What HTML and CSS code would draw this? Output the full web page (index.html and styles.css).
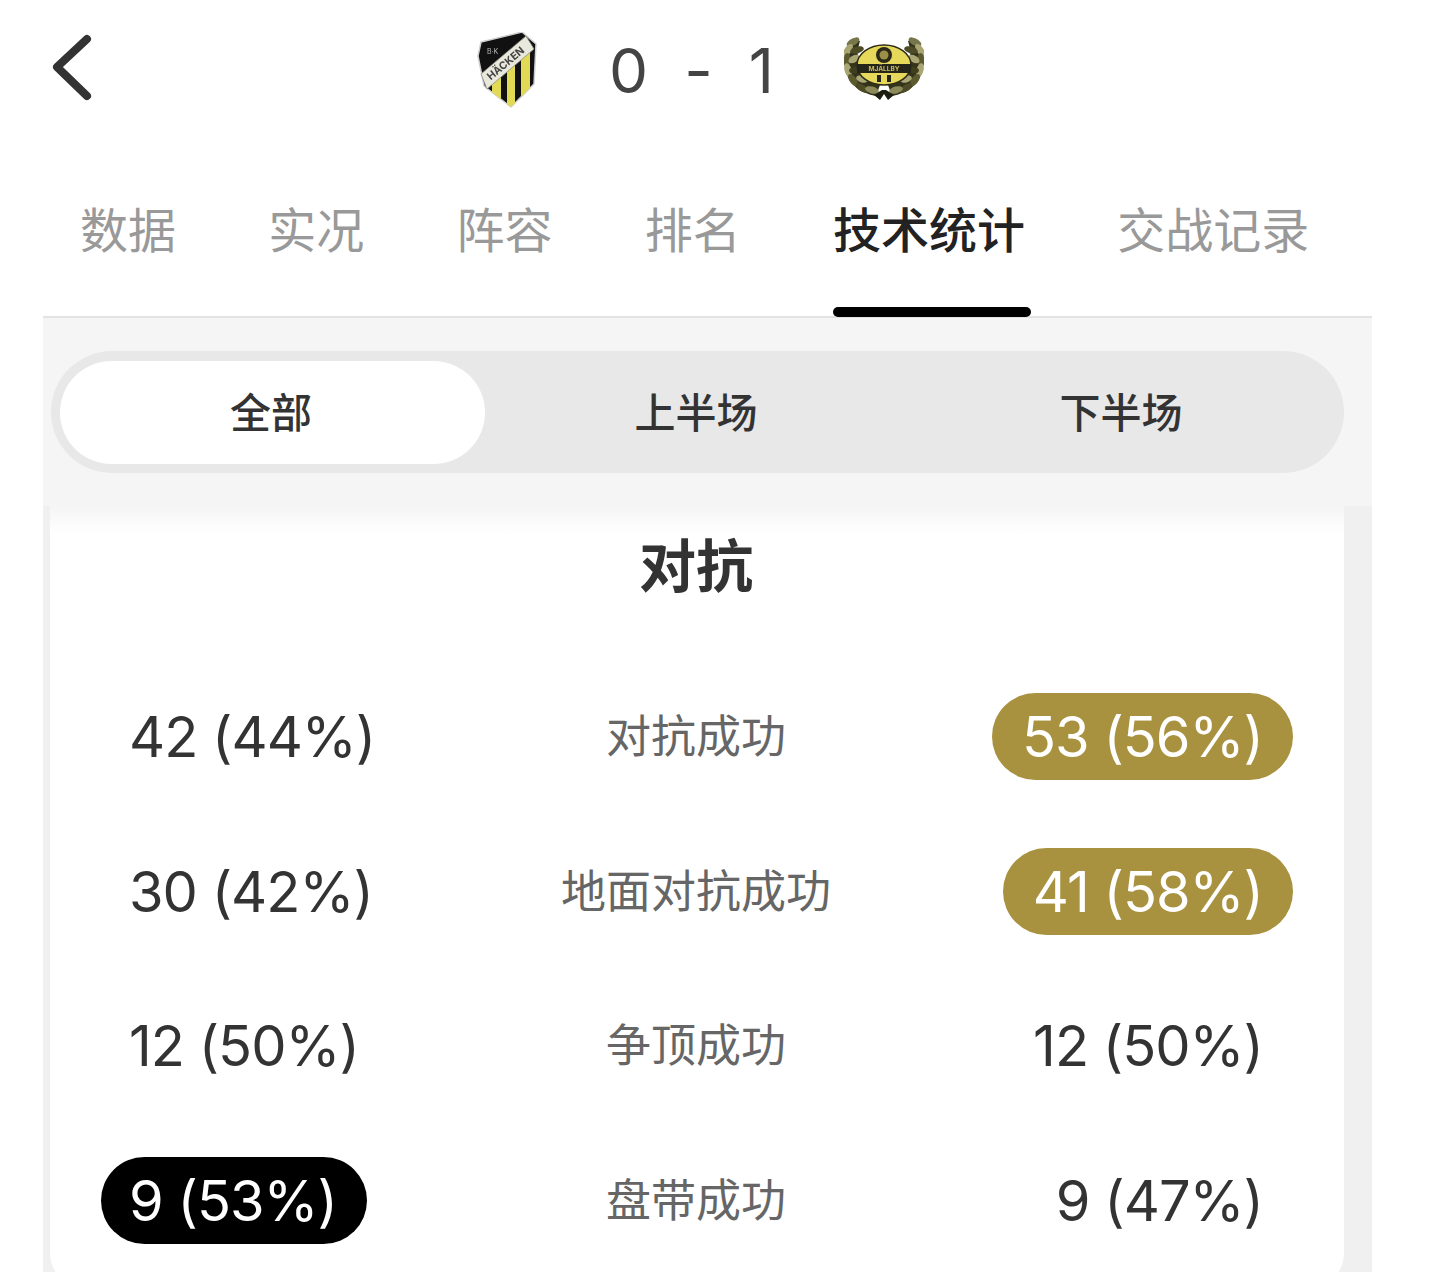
FILE: index.html
```html
<!DOCTYPE html>
<html lang="zh-CN">
<head>
  <meta charset="UTF-8" />
  <meta name="viewport" content="width=device-width, initial-scale=1.0"/>
  <title>技术统计</title>
  <link rel="stylesheet" href="styles.css">
</head>
<body>
  <div class="page">
    <!-- Score header -->
    <header class="match-head">
      <svg class="back" viewBox="0 0 44 68" width="44" height="68" aria-hidden="true">
        <path d="M37 5 L7 33 L37 62" fill="none" stroke="#333" stroke-width="8" stroke-linecap="round" stroke-linejoin="round"/>
      </svg>
      <div class="score">
        <svg class="crest-home" viewBox="0 0 64 76" width="64" height="76" aria-hidden="true">
          <defs>
            <clipPath id="shield"><path d="M7 10 L48 0 L62 12 L60 52 L37 75 L10 54 L4 24 Z"/></clipPath>
          </defs>
          <path d="M7 10 L48 0 L62 12 L60 52 L37 75 L10 54 L4 24 Z" fill="#111" stroke="#cfcfcf" stroke-width="1.5" stroke-linejoin="round"/>
          <g clip-path="url(#shield)">
            <path d="M18 38 h9 v38 h-9 Z M33 24 h8 v52 h-8 Z M47 12 h9 v56 h-9 Z" fill="#e2da55"/>
          </g>
          <path d="M7 42 L52 4 L60 17 L13 57 Z" fill="#e8e8dc" stroke="#8d8d80" stroke-width="0.8"/>
          <text class="crest-band" transform="translate(34 34) rotate(-40)">HÄCKEN</text>
          <text class="crest-bk" x="13" y="22">B·K</text>
        </svg>
        <span class="score-num first">0</span>
        <span class="score-dash">-</span>
        <span class="score-num">1</span>
        <svg class="crest-away" viewBox="0 0 80 64" width="80" height="64" aria-hidden="true">
          <defs>
            <g id="wreath">
              <path d="M10 2 C1 12 -1 26 3 38 C7 48 16 56 32 59 L36 48 C24 44 16 36 14 26 C13 18 14 10 16 4 Z" fill="#33321a"/>
              <ellipse cx="9" cy="5" rx="7" ry="3.5" transform="rotate(-30 9 5)" fill="#77764a"/>
              <ellipse cx="4" cy="13" rx="7" ry="3.5" transform="rotate(-55 4 13)" fill="#a9a673"/>
              <ellipse cx="13" cy="13" rx="7" ry="3.5" transform="rotate(-15 13 13)" fill="#4c4b26"/>
              <ellipse cx="3" cy="23" rx="7" ry="3.5" transform="rotate(-85 3 23)" fill="#5c5b30"/>
              <ellipse cx="10" cy="22" rx="6" ry="3.5" transform="rotate(-30 10 22)" fill="#a9a673"/>
              <ellipse cx="4" cy="33" rx="7" ry="3.5" transform="rotate(75 4 33)" fill="#a9a673"/>
              <ellipse cx="11" cy="33" rx="6" ry="3.5" transform="rotate(-10 11 33)" fill="#3f3e1f"/>
              <ellipse cx="9" cy="43" rx="7" ry="3.5" transform="rotate(55 9 43)" fill="#5c5b30"/>
              <ellipse cx="18" cy="42" rx="6" ry="3.5" transform="rotate(15 18 42)" fill="#a9a673"/>
              <ellipse cx="18" cy="51" rx="7" ry="3.5" transform="rotate(35 18 51)" fill="#4c4b26"/>
              <ellipse cx="28" cy="53" rx="7" ry="3.5" transform="rotate(15 28 53)" fill="#8b8a58"/>
            </g>
          </defs>
          <use href="#wreath"/>
          <use href="#wreath" transform="matrix(-1 0 0 1 80 0)"/>
          <ellipse cx="40" cy="28" rx="27" ry="20" fill="#e6d85a" stroke="#2e2d16" stroke-width="1.5"/>
          <circle cx="40" cy="18" r="8" fill="#2b2a18"/>
          <circle cx="40" cy="18" r="4.5" fill="#9c9048"/>
          <rect x="13" y="27" width="54" height="9" fill="#26251a"/>
          <text class="crest-name" x="40" y="34">MJÄLLBY</text>
          <path d="M33 38 h4 v7 h-4 Z M43 38 h4 v7 h-4 Z" fill="#26251a"/>
          <path d="M30 58 L38 53 L42 53 L50 58 L44 63 L40 57 L36 63 Z" fill="#1d1c10"/>
        </svg>
      </div>
    </header>

    <main class="content">
      <nav class="tabs">
        <a class="tab">数据</a>
        <a class="tab">实况</a>
        <a class="tab">阵容</a>
        <a class="tab">排名</a>
        <a class="tab active">技术统计</a>
        <a class="tab">交战记录</a>
      </nav>

      <section class="panel">
        <div class="segment-bar">
          <div class="segment selected">全部</div>
          <div class="segment">上半场</div>
          <div class="segment">下半场</div>
        </div>

        <div class="card-wrap">
          <div class="card">
            <h2>对抗</h2>
            <div class="stat-row">
              <span class="val left">42 (44%)</span>
              <span class="label">对抗成功</span>
              <span class="val right gold">53 (56%)</span>
            </div>
            <div class="stat-row">
              <span class="val left">30 (42%)</span>
              <span class="label">地面对抗成功</span>
              <span class="val right gold">41 (58%)</span>
            </div>
            <div class="stat-row">
              <span class="val left">12 (50%)</span>
              <span class="label">争顶成功</span>
              <span class="val right">12 (50%)</span>
            </div>
            <div class="stat-row">
              <span class="val left black">9 (53%)</span>
              <span class="label">盘带成功</span>
              <span class="val right">9 (47%)</span>
            </div>
          </div>
        </div>
      </section>
    </main>
  </div>
</body>
</html>
```

FILE: styles.css
```css
* {
  box-sizing: border-box;
  margin: 0;
  padding: 0;
  font-family: Inter, 'Noto Sans CJK SC', sans-serif;
}

body {
  background: #fff;
  color: #333;
}

.page {
  height: 1272px;
  overflow: hidden;
}

.match-head {
  height: 140px;
  position: relative;
}

.back {
  position: absolute;
  left: 50px;
  top: 34px;
}

.score {
  height: 140px;
  padding-left: 474px;
  display: flex;
  align-items: center;
  color: #444;
}

.crest-home {
  flex: none;
  margin-top: -1px;
  filter: blur(0.4px);
}

.crest-away {
  flex: none;
  margin-left: 70px;
  margin-top: -2px;
  filter: blur(0.4px);
}

.score-num {
  font-size: 62px;
  margin-left: 36px;
}

.score-num.first {
  margin-left: 71px;
}

.score-dash {
  font-size: 62px;
  margin-left: 36px;
}

.crest-band {
  font-size: 10.5px;
  font-weight: bold;
  fill: #444;
  text-anchor: middle;
}

.crest-bk {
  font-size: 7px;
  fill: #bbb;
}

.crest-name {
  font-size: 6.5px;
  font-weight: bold;
  fill: #c9bc62;
  text-anchor: middle;
}

.content {
  margin-left: 43px;
  width: 1329px;
}

.tabs {
  height: 178px;
  padding: 45px 0 0 37px;
  display: flex;
  gap: 92.25px;
  border-bottom: 2px solid #e3e3e3;
}

.tab {
  position: relative;
  height: 90px;
  font-size: 48px;
  line-height: 92px;
  color: #999;
}

.tab.active {
  font-weight: 500;
  color: #222;
}

.tab.active::after {
  content: "";
  position: absolute;
  left: 0;
  right: -6px;
  bottom: -42px;
  height: 10px;
  border-radius: 5px;
  background: #000;
}

.panel {
  background: #f5f5f5;
}

.segment-bar {
  margin-left: 8px;
  width: 1293px;
  height: 122px;
  position: relative;
  top: 33px;
  padding: 10px 9px;
  display: grid;
  grid-template-columns: repeat(3, 1fr);
  background: #e8e8e8;
  border-radius: 61px;
}

.segment {
  height: 103px;
  line-height: 105px;
  padding-right: 3px;
  text-align: center;
  font-size: 41px;
  font-weight: 500;
  color: #333;
  border-radius: 52px;
}

.segment.selected {
  background: #fff;
}

.card-wrap {
  margin-top: 66px;
  padding: 0 28px 0 7px;
  background: #f0f0f0;
  height: 766px;
}

.card {
  height: 780px;
  background: linear-gradient(to bottom, #f5f5f5, #fff 28px);
  border-radius: 0 0 32px 32px;
  padding: 0 51px;
}

.card h2 {
  height: 187px;
  padding-top: 26px;
  padding-right: 2px;
  line-height: 70px;
  font-size: 57px;
  font-weight: bold;
  text-align: center;
  color: #333;
}

.stat-row {
  height: 87px;
  margin-bottom: 67.5px;
  display: grid;
  grid-template-columns: 1fr 1fr 1fr;
  align-items: center;
}

.val {
  height: 87px;
  line-height: 89px;
  padding: 0 30px;
  font-size: 56px;
  letter-spacing: -1px;
  color: #333;
  border-radius: 44px;
  white-space: nowrap;
}

.val.left {
  justify-self: start;
  padding-left: 28px;
}

.val.right {
  justify-self: end;
}

.val.gold {
  background: #a8913f;
  color: #fff;
}

.val.black {
  background: #000;
  color: #fff;
}

.label {
  font-size: 45px;
  line-height: 87px;
  height: 87px;
  padding-right: 2px;
  color: #666;
  text-align: center;
  white-space: nowrap;
}
```
